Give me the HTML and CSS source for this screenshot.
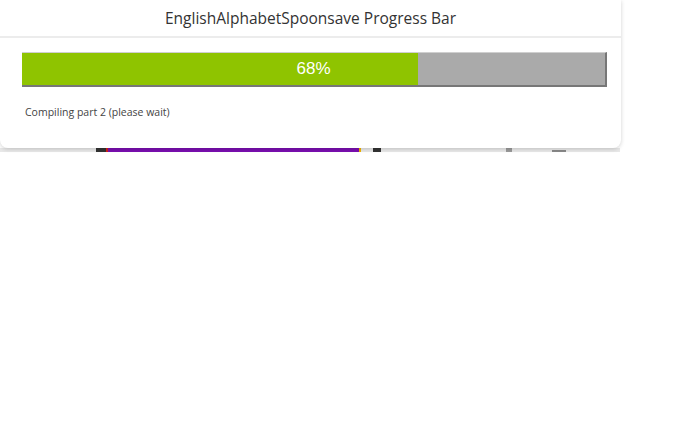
FILE: index.html
```html
<!DOCTYPE html>
<html lang="en">
<head>
  <meta charset="UTF-8">
  <meta name="viewport" content="width=device-width, initial-scale=1.0">
  <title>Progress Bar</title>
  <link rel="stylesheet" href="styles.css">
</head>
<body>
  <div class="page">
    <!-- toolbar of the page behind the dialog, mostly hidden -->
    <div class="strip">
      <span class="seg dark"></span>
      <span class="seg red"></span>
      <span class="seg purple"></span>
      <span class="seg yellow"></span>
      <span class="seg gap1"></span>
      <span class="seg dark2"></span>
      <span class="seg gap2"></span>
      <span class="seg grey"></span>
      <span class="seg gap3"></span>
      <span class="seg bar"></span>
    </div>
  </div>

  <div class="dialog">
    <div class="dialog-header">EnglishAlphabetSpoonsave Progress Bar</div>
    <div class="dialog-body">
      <div class="progress">
        <div class="progress-fill" style="width: 68%"></div>
        <span class="progress-label">68%</span>
      </div>
      <p class="status">Compiling part 2 (please wait)</p>
    </div>
  </div>
</body>
</html>
```

FILE: styles.css
```css
body {
  margin: 0;
  font-family: "Open Sans", "Liberation Sans", sans-serif;
  background-color: #ffffff;
  color: #333;
}

.page {
  padding-top: 148px;
}

.strip {
  display: flex;
  height: 4px;
  width: 620px;
  background-color: #e8e8e8;
  padding-left: 96px;
  box-sizing: border-box;
}

.seg {
  display: block;
  height: 4px;
}

.dark { width: 10px; background-color: #333; }
.red { width: 2px; background-color: #d0201a; }
.purple { width: 251px; background-color: #7a0fb0; }
.yellow { width: 2px; background-color: #f0b400; }
.gap1 { width: 12px; }
.dark2 { width: 8px; background-color: #333; }
.gap2 { width: 125px; }
.grey { width: 6px; background-color: #999; }
.gap3 { width: 40px; }
.bar { width: 14px; background-color: #888; margin-top: 2px; height: 2px; }

.dialog {
  position: absolute;
  top: 0;
  left: 0;
  width: 621px;
  height: 148px;
  background-color: #ffffff;
  border-radius: 0 0 8px 8px;
  box-shadow: 0px 1px 4px rgba(0, 0, 0, 0.18);
}

.dialog-header {
  height: 36px;
  line-height: 36px;
  text-align: center;
  font-size: 15.5px;
  color: #333;
  border-bottom: 2px solid #ececec;
}

.dialog-body {
  padding: 14px 14px 0 22px;
}

.progress {
  position: relative;
  width: 585px;
  height: 35px;
  box-sizing: border-box;
  background-color: #aaaaaa;
  border-top: 1px solid #cfcfcf;
  border-right: 2px solid #777;
  border-bottom: 2px solid #777;
  display: flex;
  align-items: center;
  justify-content: center;
}

.progress-fill {
  position: absolute;
  top: 0;
  left: 0;
  bottom: 0;
  background-color: #8fc400;
}

.progress-label {
  position: relative;
  color: #ffffff;
  font-family: "Liberation Sans", Arial, sans-serif;
  font-size: 17px;
}

.status {
  margin: 18px 0 0 3px;
  font-size: 10.5px;
  color: #444;
}
```
